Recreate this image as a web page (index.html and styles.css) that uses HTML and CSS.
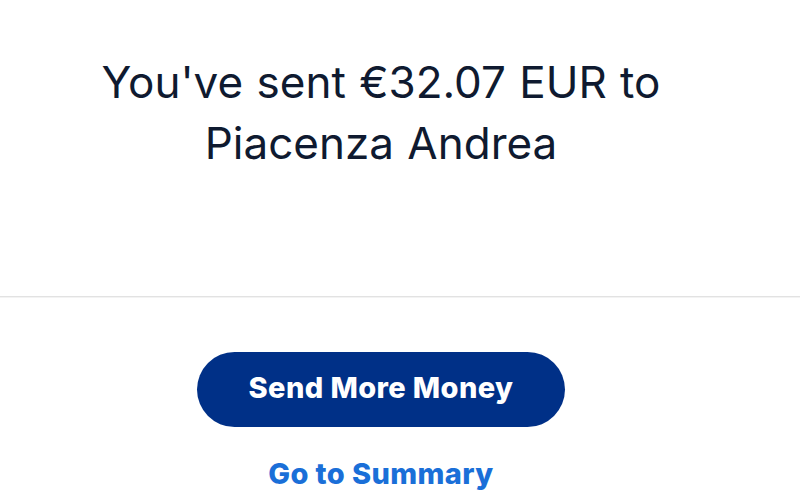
FILE: index.html
```html
<!DOCTYPE html>
<html>
<head>
<meta charset="utf-8">
<link rel="stylesheet" href="styles.css">
</head>
<body>
<div class="page">
  <section class="top">
    <h1 class="title">You've sent €32.07 EUR to<br>Piacenza Andrea</h1>
  </section>
  <hr class="divider">
  <section class="actions">
    <button class="primary">Send More Money</button>
    <a class="link" href="#">Go to Summary</a>
  </section>
</div>
</body>
</html>
```
FILE: styles.css
```css
html, body {
  margin: 0;
  padding: 0;
  background: #fff;
}
.page {
  width: 800px;
  height: 504px;
  overflow: hidden;
  font-family: Inter, "Noto Sans", sans-serif;
}
.top {
  height: 296px;
  padding-right: 38px;
  box-sizing: border-box;
  display: flex;
  justify-content: center;
}
.title {
  margin: 0;
  padding-top: 52px;
  font-size: 44px;
  line-height: 61px;
  font-weight: 400;
  color: #0f1a30;
  text-align: center;
  letter-spacing: 0;
  word-spacing: 1px;
}
.divider {
  margin: 0;
  border: 0;
  height: 1px;
  background: #e2e2e2;
  box-shadow: 0 1px 0 #f3f3f3;
}
.actions {
  padding-right: 38px;
  padding-top: 55px;
  display: flex;
  flex-direction: column;
  align-items: center;
}
.primary {
  width: 368px;
  height: 75px;
  padding: 0 0 4px;
  border: 0;
  border-radius: 38px;
  background: #003087;
  color: #fff;
  font-family: Inter, "Noto Sans", sans-serif;
  font-size: 29px;
  font-weight: 800;
  letter-spacing: 0.4px;
}
.link {
  margin-top: 29px;
  font-size: 29px;
  font-weight: 800;
  color: #1a6fd8;
  text-decoration: none;
  letter-spacing: 0.4px;
}
```
